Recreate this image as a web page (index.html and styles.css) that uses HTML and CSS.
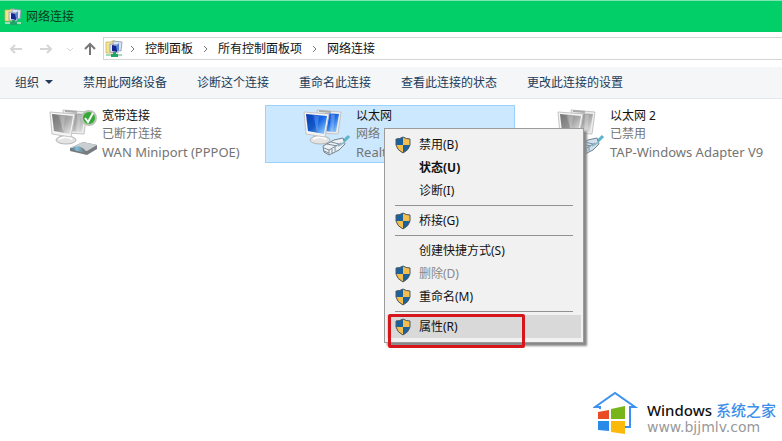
FILE: index.html
```html
<!DOCTYPE html>
<html lang="zh-CN">
<head>
<meta charset="utf-8">
<title>网络连接</title>
<meta name="viewport" content="width=device-width, initial-scale=1">
<link rel="stylesheet" href="styles.css">
</head>
<body>
<svg class="defs" aria-hidden="true">
  <defs>
    <linearGradient id="blue" x1="0" y1="0" x2="1" y2="1">
      <stop offset="0" stop-color="#0a45c8"/><stop offset=".5" stop-color="#1767e6"/><stop offset="1" stop-color="#a5dcfc"/>
    </linearGradient>
    <linearGradient id="gray" x1="0" y1="0" x2="1" y2="1">
      <stop offset="0" stop-color="#858585"/><stop offset=".5" stop-color="#a6a6a6"/><stop offset="1" stop-color="#eeeeee"/>
    </linearGradient>
    <linearGradient id="modem" x1="0" y1="0" x2="1" y2="0">
      <stop offset="0" stop-color="#4c6474"/><stop offset=".4" stop-color="#7fc0da"/><stop offset="1" stop-color="#777"/>
    </linearGradient>
    <symbol id="net" viewBox="0 0 18 18">
      <path d="M1 2h5l1-1h3v12H1z" fill="#f3e590" stroke="#c9b65a" stroke-width=".8"/>
      <path d="M8 1l9 1-1 9-8-1z" fill="#dbe5f2" stroke="#8793ad" stroke-width=".8"/>
      <path d="M5 4l8 1v8l-8-1z" fill="#e8effa" stroke="#8c98b5" stroke-width=".8"/>
      <path d="M7 5l6 1-1 6-5-1z" fill="#14258f"/>
      <path d="M11 6l3-3v7l-2 1z" fill="#5684d4"/>
      <path d="M1 15h16" stroke="#a9d9bb" stroke-width="2"/>
      <path d="M8 12h3v2h2v3H6v-3h2z" fill="#22a368"/>
    </symbol>
    <symbol id="screens" viewBox="0 0 52 48">
      <path d="M15 2l24 2-3 22-18-1z" fill="#ededed" stroke="#c4c4c4"/>
      <path d="M19 5l18 1-3 18-14-1z" fill="var(--screen)"/>
      <path d="M17 2l12 1v2l-12-1z" fill="#aaa"/>
      <path d="M29 6l4 1-2 17-3-1z" fill="#fff" opacity=".25"/>
      <path d="M11 25l8 1v6h-7z" fill="#c4c4c4"/>
      <ellipse cx="18" cy="32" rx="10" ry="4" fill="#e4e4e4" stroke="#b4b4b4"/>
      <path d="M11 31q7-4 13 0" fill="none" stroke="#fff" stroke-width="2"/>
      <path d="M2 4l25 2-4 23-19-3z" fill="#f4f4f4" stroke="#c5c5c5"/>
      <path d="M4 6l21 2-3 18-16-3z" fill="var(--screen)"/>
      <path d="M4 6l6 1 6 18-10-2z" fill="#000" opacity=".12"/>
      <path d="M12 7l5 1-2 16-1-3z" fill="#fff" opacity=".18"/>
    </symbol>
    <symbol id="plug" viewBox="0 0 52 48">
      <path d="M37 36q6-3 10-8" fill="none" stroke="#5db5cd" stroke-width="3"/>
      <path d="M21 38l11-6 9-2 2 6-6 6-10 5-5-3z" fill="var(--plug)" stroke="#71818d"/>
      <path d="M22 40l5 2v4M27 42l12-7M25 36l10 2M29 34l8 2M30 41v4M33 39v4M22 43l5 2" fill="none" stroke="#7b8d9c"/>
      <path d="M36 38l7-4" stroke="#8fb8c8" stroke-width="2"/>
    </symbol>
    <symbol id="shield" viewBox="0 0 16 18">
      <path d="M8 1q3 2 7 2v6q-1 5-7 8-6-3-7-8V3q4 0 7-2z" fill="#19629e"/>
      <path d="M8 1q3 2 7 2v6H8z" fill="#f5be4c"/>
      <path d="M1 9h7v8Q2 14 1 9z" fill="#f5be4c"/>
      <path d="M8 1q3 2 7 2v6q-1 5-7 8-6-3-7-8V3q4 0 7-2z" fill="none" stroke="#4b5b66"/>
    </symbol>
  </defs>
</svg>

<header class="titlebar">
  <svg class="net-icon"><use href="#net"/></svg>
  <h1>网络连接</h1>
</header>

<nav class="address-row" aria-label="地址栏">
  <button class="nav-button back" aria-label="后退"><svg viewBox="0 0 14 14"><path d="M13 7H2M6 3L2 7l4 4"/></svg></button>
  <button class="nav-button forward" aria-label="前进"><svg viewBox="0 0 14 14"><path d="M1 7h11M8 3l4 4-4 4"/></svg></button>
  <button class="nav-button recent" aria-label="最近位置"><svg viewBox="0 0 14 14"><path d="M4 6l3 3 3-3"/></svg></button>
  <button class="nav-button up" aria-label="上移"><svg viewBox="0 0 14 14"><path d="M7 13V2M2 7l5-5 5 5"/></svg></button>
  <div class="breadcrumbs">
    <svg class="net-icon"><use href="#net"/></svg>
    <svg class="chevron first" viewBox="0 0 6 8"><path d="M1 1l3 3-3 3"/></svg>
    <a href="#">控制面板</a>
    <svg class="chevron" viewBox="0 0 6 8"><path d="M1 1l3 3-3 3"/></svg>
    <a href="#">所有控制面板项</a>
    <svg class="chevron" viewBox="0 0 6 8"><path d="M1 1l3 3-3 3"/></svg>
    <a href="#">网络连接</a>
  </div>
</nav>

<div class="toolbar" role="toolbar">
  <button>组织<svg class="caret" viewBox="0 0 8 4"><path d="M0 0h8L4 4z"/></svg></button>
  <button>禁用此网络设备</button>
  <button>诊断这个连接</button>
  <button>重命名此连接</button>
  <button>查看此连接的状态</button>
  <button>更改此连接的设置</button>
</div>

<main class="connections">
  <article class="tile">
    <svg class="tile-icon off" viewBox="0 0 52 48">
      <use href="#screens"/>
      <path d="M22 40l13-6 14 3v4l-10 6-17-4z" fill="#777c81"/>
      <path d="M22 40l13-6 14 3-10 6z" fill="#c9ced2"/>
      <path d="M23 41q7-6 14 1l-1 3z" fill="url(#modem)"/>
      <circle cx="41" cy="10" r="7" fill="#35a835" stroke="#b9c4b5" stroke-width="2"/>
      <path d="M37 10l3 4 5-9" fill="none" stroke="#fff" stroke-width="2"/>
    </svg>
    <div class="info"><h2>宽带连接</h2><p>已断开连接</p><p class="device">WAN Miniport (PPPOE)</p></div>
  </article>
  <article class="tile selected">
    <svg class="tile-icon on" viewBox="0 0 52 48"><use href="#screens"/><use href="#plug"/></svg>
    <div class="info"><h2>以太网</h2><p>网络</p><p class="device">Realtek</p></div>
    <div class="menu" role="menu">
      <button role="menuitem"><svg><use href="#shield"/></svg><span>禁用(B)</span></button>
      <button role="menuitem" class="default"><span>状态(U)</span></button>
      <button role="menuitem"><span>诊断(I)</span></button>
      <hr>
      <button role="menuitem"><svg><use href="#shield"/></svg><span>桥接(G)</span></button>
      <hr>
      <button role="menuitem"><span>创建快捷方式(S)</span></button>
      <button role="menuitem" disabled><svg><use href="#shield"/></svg><span>删除(D)</span></button>
      <button role="menuitem"><svg><use href="#shield"/></svg><span>重命名(M)</span></button>
      <hr>
      <button role="menuitem" class="active"><svg><use href="#shield"/></svg><span>属性(R)</span></button>
    </div>
  </article>
  <article class="tile">
    <svg class="tile-icon off disabled" viewBox="0 0 52 48"><use href="#screens"/><use href="#plug"/></svg>
    <div class="info"><h2>以太网 2</h2><p>已禁用</p><p class="device">TAP-Windows Adapter V9</p></div>
  </article>
</main>

<footer class="brand">
  <svg class="brand-logo" viewBox="0 0 46 46">
    <path d="M7 18v-2H2L22 2l20 14h-5v20h-6" fill="none" stroke="#3c91ef" stroke-width="2"/>
    <path d="M5 21l11-2v9H5z" fill="#e94b25"/>
    <path d="M18 18l14-3v13H18z" fill="#78b51b"/>
    <path d="M5 30h11v10L5 39z" fill="#2a8ae8"/>
    <path d="M18 30h14v13l-14-2z" fill="#fbb90c"/>
  </svg>
  <div class="brand-text">
    <strong>Windows <span>系统之家</span></strong>
    <small>www.bjjmlv.com</small>
  </div>
</footer>
</body>
</html>
```
FILE: styles.css
```css
*,
*::after {
  box-sizing: border-box;
}

body {
  display: flex;
  flex-direction: column;
  min-height: 100vh;
  margin: 0;
  background: #fff;
  color: #111;
  font: 12px/18px "Noto Sans", "Noto Sans CJK SC", sans-serif;
}

h1, h2, p {
  margin: 0;
  font-size: 12px;
  font-weight: 400;
}

button {
  padding: 0;
  border: 0;
  background: none;
  color: inherit;
  font: inherit;
}

.defs {
  position: absolute;
  width: 0;
  height: 0;
}

.net-icon {
  flex: none;
  width: 18px;
  height: 18px;
}

.titlebar {
  display: flex;
  align-items: center;
  gap: 4px;
  height: 32px;
  padding-left: 4px;
  border-top: 1px solid #7fe6b3;
  background: #03cf68;
  color: #073d20;
}

.address-row {
  display: flex;
  align-items: center;
  height: 35px;
  padding: 0 0 2px 9px;
}

.nav-button {
  width: 14px;
  height: 14px;
  margin-right: 6px;
}

.nav-button svg {
  display: block;
  width: 14px;
  height: 14px;
  fill: none;
  stroke: #d6d6d6;
  stroke-width: 2;
}

.nav-button.back {
  margin-right: 16px;
}

.nav-button.forward {
  margin-right: 10px;
}

.nav-button.recent svg {
  stroke-width: 1;
}

.nav-button.up svg {
  stroke: #777;
}

.breadcrumbs {
  display: flex;
  flex: 1;
  align-items: center;
  height: 23px;
  padding-left: 1px;
  border: solid #d4d4d4;
  border-width: 1px 0 1px 1px;
}

.breadcrumbs a {
  color: #111;
  text-decoration: none;
}

.chevron {
  width: 6px;
  height: 8px;
  margin: 0 9px 0 10px;
  fill: none;
  stroke: #777;
}

.chevron.first {
  margin-left: 7px;
}

.toolbar {
  display: flex;
  align-items: center;
  gap: 30px;
  height: 32px;
  padding-left: 15px;
  border-bottom: 1px solid #e3e6ea;
  background: #f4f6f8;
  color: #213b59;
}

.caret {
  width: 8px;
  height: 4px;
  margin: 0 0 3px 6px;
  fill: #213b59;
}

.connections {
  display: grid;
  grid-template-columns: repeat(auto-fill, 250px);
  gap: 4px;
  padding: 6px 11px;
}

.tile {
  position: relative;
  display: flex;
  height: 58px;
  padding: 1px;
  border: 1px solid transparent;
}

.tile.selected {
  border-color: #99d1ff;
  background: #cce8ff;
}

.tile-icon {
  --plug: #eef2f3;
  flex: none;
  width: 52px;
  height: 48px;
  margin: 1px 2px 0 35px;
}

.tile-icon.on {
  --screen: url(#blue);
}

.tile-icon.off {
  --screen: url(#gray);
}

.tile-icon.disabled {
  --plug: #cfe2ee;
}

.info {
  color: #747474;
  white-space: nowrap;
}

.info h2 {
  color: #111;
}

.info .device {
  font-size: 13px;
}

.menu {
  position: absolute;
  z-index: 1;
  top: 22px;
  left: 118px;
  width: 200px;
  padding: 4px 2px;
  border: 1px solid #9b9b9b;
  background: #f1f1f1;
  box-shadow: 3px 3px 2px #888;
}

.menu button {
  position: relative;
  display: flex;
  align-items: center;
  width: 100%;
  height: 23px;
  padding-left: 8px;
}

.menu svg {
  width: 16px;
  height: 18px;
}

.menu span {
  margin-left: 8px;
}

.menu span:first-child {
  margin-left: 24px;
}

.menu .default {
  font-weight: 700;
}

.menu button:disabled {
  color: #898989;
}

.menu .active {
  background: #d9d9d9;
}

.menu .active::after {
  content: "";
  position: absolute;
  top: -1px;
  left: 1px;
  width: 137px;
  height: 34px;
  border: 3px solid #d6161a;
  border-radius: 2px;
}

.menu hr {
  height: 1px;
  margin: 3px 8px;
  border: 0;
  background: #929292;
}

.brand {
  display: flex;
  align-items: center;
  align-self: flex-end;
  gap: 8px;
  margin: auto 6px 4px 0;
}

.brand-logo {
  width: 46px;
  height: 46px;
}

.brand-text {
  display: flex;
  flex-direction: column;
  padding-top: 8px;
}

.brand strong {
  color: #111;
  font-size: 15px;
  font-weight: 500;
  line-height: 18px;
}

.brand strong span {
  color: #3c8ee8;
}

.brand small {
  color: #999;
  font: 14px/16px "DejaVu Sans", sans-serif;
}
```
